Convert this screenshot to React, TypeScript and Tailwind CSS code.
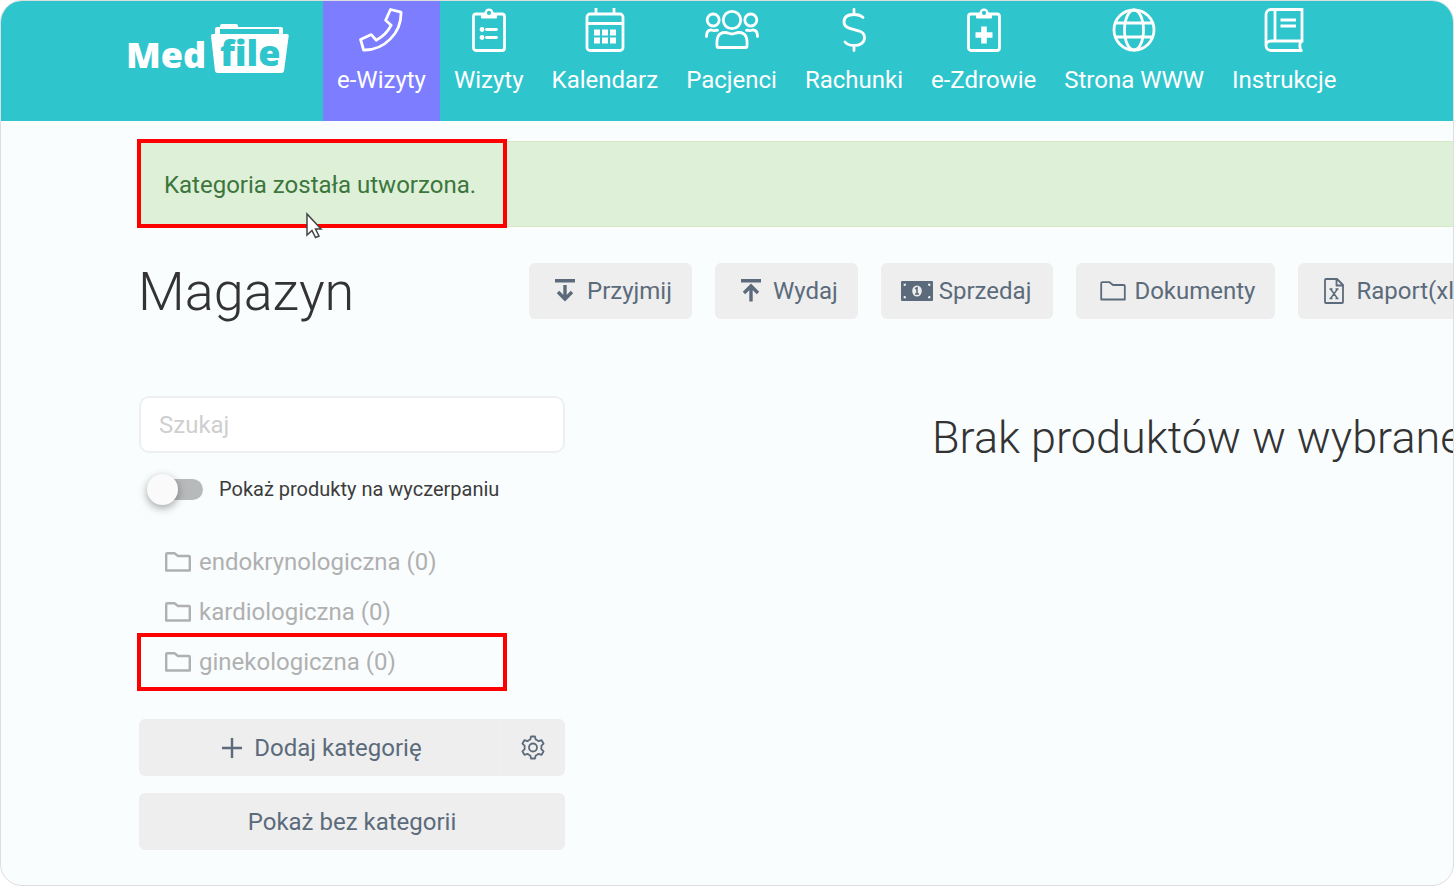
import React from "react";

const PhoneIcon = () => (
  <svg width="44" height="44" viewBox="0 0 44 44" fill="none" stroke="currentColor" strokeWidth="2.8" strokeLinejoin="round">
    <path d="M31.5 1.5 42 4.2C42.6 25 25 42.6 4.6 42L1.6 31.5 12.3 26.6 17.2 32.2C23.5 29 29 23.5 32.2 17.2L26.6 12.3Z" />
  </svg>
);

const ClipboardShape = () => (
  <>
    <rect x="1.5" y="6" width="31" height="36.5" rx="2.5" fill="none" stroke="currentColor" strokeWidth="2.8" />
    <path d="M9 6h4a4.1 4.1 0 0 1 8 0h4v3.5a1 1 0 0 1-1 1H10a1 1 0 0 1-1-1Z" fill="currentColor" />
    <circle cx="17" cy="4.9" r="3.3" fill="#2fc5cd" stroke="currentColor" strokeWidth="2.4" />
  </>
);

const VisitsIcon = () => (
  <svg width="34" height="44" viewBox="0 0 34 44">
    <ClipboardShape />
    <circle cx="10" cy="21.5" r="2.4" fill="currentColor" />
    <circle cx="10" cy="29.5" r="2.4" fill="currentColor" />
    <path d="M14.5 21.5h10M14.5 29.5h10" stroke="currentColor" strokeWidth="2.8" strokeLinecap="round" />
  </svg>
);

const HealthIcon = () => (
  <svg width="34" height="44" viewBox="0 0 34 44">
    <ClipboardShape />
    <path d="M14.2 18.5h5.6v5.7h5.7v5.6h-5.7v5.7h-5.6v-5.7H8.5v-5.6h5.7Z" fill="currentColor" />
  </svg>
);

const CalendarIcon = () => (
  <svg width="40" height="44" viewBox="0 0 40 44">
    <g fill="none" stroke="currentColor" strokeWidth="2.8">
      <rect x="2" y="6" width="36" height="36.5" rx="3" />
      <path d="M2 15.5h36M11 0v6M29 0v6" />
    </g>
    <path
      d="M9 21.5h6v6H9ZM17 21.5h6v6h-6ZM25 21.5h6v6h-6ZM9 29.5h6v6H9ZM17 29.5h6v6h-6ZM25 29.5h6v6h-6Z"
      fill="currentColor"
    />
  </svg>
);

const PatientsIcon = () => (
  <svg width="54" height="44" viewBox="0 0 54 44" fill="none" stroke="currentColor" strokeWidth="2.8" strokeLinecap="round">
    <circle cx="27" cy="12" r="8.7" />
    <circle cx="8.2" cy="12" r="6" />
    <circle cx="45.8" cy="12" r="6" />
    <path d="M12 38C11.5 30 13 24.5 20 24.5c3.5 0 4 1.5 7 1.5s3.5-1.5 7-1.5c7 0 8.5 5.5 8 13.5q0 1.5-1.5 1.5h-27Q12 39.5 12 38Z" />
    <path d="M1.5 28.5C1.5 24 3 22 6 22c1 0 1.5.6 3 .6s2-.6 3.5-.3M52.5 28.5c0-4.5-1.5-6.5-4.5-6.5-1 0-1.5.6-3 .6s-2-.6-3.5-.3" />
  </svg>
);

const DollarIcon = () => (
  <svg width="24" height="44" viewBox="0 0 24 44" fill="none" stroke="currentColor" strokeWidth="2.8" strokeLinecap="round">
    <path d="M12 1.5v5M12 37.5v5M21 9.5C19 7.5 15.5 6.5 12 6.5c-6 0-10 2.5-10 7.5 0 10.5 20.5 4.5 20.5 15.5 0 5.5-4.5 8-10.5 8-4 0-7-1-9-3.5" />
  </svg>
);

const GlobeIcon = () => (
  <svg width="44" height="44" viewBox="0 0 44 44" fill="none" stroke="currentColor" strokeWidth="2.8">
    <circle cx="22" cy="22" r="20" />
    <ellipse cx="22" cy="22" rx="9.5" ry="20" />
    <path d="M3.5 15h37M3.5 29h37" />
  </svg>
);

const BookIcon = () => (
  <svg width="40" height="44" viewBox="0 0 40 44" fill="none" stroke="currentColor" strokeWidth="2.8">
    <path d="M38 1.5H7C4 1.5 2 3.5 2 6.5v31c0 3 2 5 5 5h31.5M38 0v33H7c-3 0-5 2-5 4.5M11 1.5V33M37 33c-1.5 3-1.5 6.5 0 9.5" />
    <path d="M16.5 12H32M16.5 18H32" strokeWidth="3" />
  </svg>
);

const FolderIcon = ({ strokeWidth = 1.8 }: { strokeWidth?: number }) => (
  <svg
    width="26"
    height="20"
    viewBox="0 0 26 20"
    fill="none"
    stroke="currentColor"
    strokeWidth={strokeWidth}
    strokeLinejoin="round"
    className="shrink-0"
  >
    <path d="M1.2 2.2q0-1 1-1h7.3L13 4h10.8q1 0 1 1v13.5H1.2Z" />
  </svg>
);

const ReceiveIcon = () => (
  <svg width="20" height="24" viewBox="0 0 20 24" fill="none" stroke="currentColor" strokeWidth="3.4">
    <path d="M0 1.7h20M10 6v13M3 13l7 7 7-7" />
  </svg>
);

const IssueIcon = () => (
  <svg width="20" height="24" viewBox="0 0 20 24" fill="none" stroke="currentColor" strokeWidth="3.4">
    <path d="M0 1.7h20M10 22.5V8M3 14l7-7 7 7" />
  </svg>
);

const MoneyIcon = () => (
  <svg width="32" height="20" viewBox="0 0 32 20">
    <rect width="32" height="20" rx="1" fill="currentColor" />
    <path d="M3.5 5V3.5H5M27 3.5h1.5V5M28.5 15v1.5H27M5 16.5H3.5V15" fill="none" stroke="#eee" strokeWidth="1.6" />
    <ellipse cx="16" cy="10" rx="4.8" ry="5.5" fill="#eee" />
    <path d="M14 7.8 16 6.8v6M14 13h4" fill="none" stroke="currentColor" strokeWidth="1.6" />
  </svg>
);

const ExcelIcon = () => (
  <svg width="20" height="26" viewBox="0 0 20 26" fill="none" stroke="currentColor" strokeWidth="1.8" strokeLinejoin="round">
    <path d="M1 2q0-1 1-1h11l6 6v17q0 1-1 1H2q-1 0-1-1ZM12.5 1v6.5H19" />
    <path d="m6.5 11 7 9.5M13.5 11l-7 9.5M5.5 11h3M11.5 11h3M5.5 20.5h3M11.5 20.5h3" strokeWidth="1.4" />
  </svg>
);

const PlusIcon = () => (
  <svg width="20" height="20" viewBox="0 0 20 20" stroke="currentColor" strokeWidth="2.4">
    <path d="M10 0v20M0 10h20" />
  </svg>
);

const GearIcon = () => (
  <svg width="26" height="26" viewBox="0 0 26 26" fill="none" stroke="currentColor" strokeWidth="1.8" strokeLinejoin="round">
    <path d="M10.3 4.5 11 1.5h4l.7 3q1.6.6 2.9 1.7l3-1 2 3.5-2.3 2.1q.3 1.7 0 3.4l2.3 2.1-2 3.5-3-1q-1.3 1.1-2.9 1.7l-.7 3h-4l-.7-3q-1.6-.6-2.9-1.7l-3 1-2-3.5 2.3-2.1q-.3-1.7 0-3.4L2.4 8.7l2-3.5 3 1q1.3-1.1 2.9-1.7Z" />
    <circle cx="13" cy="12.5" r="4" />
  </svg>
);

const Logo = () => (
  <svg
    width="162"
    height="52"
    viewBox="0 0 162 52"
    fill="white"
    role="img"
    aria-label="MedFile"
    className="overflow-visible"
  >
    <text x="-1" y="45" fontFamily="'Open Sans', sans-serif" fontWeight="800" fontSize="36">
      Med
    </text>
    <path d="M88 13V6q0-2 2-2h3V3q0-2 2-2h14q2 0 2 2v1h43q2 0 2 2v7h-4V6H93v7Z" />
    <path d="M86 11h74q2 0 1.7 2L157 48q-.4 2-2.5 2h-64q-2 0-2.5-2L84 13q-.2-2 2-2Z" />
    <text x="93" y="43" fill="#2fc5cd" fontFamily="'Open Sans', sans-serif" fontWeight="800" fontSize="36">
      file
    </text>
  </svg>
);

const navItems = [
  { label: "e-Wizyty", icon: PhoneIcon, active: true },
  { label: "Wizyty", icon: VisitsIcon },
  { label: "Kalendarz", icon: CalendarIcon },
  { label: "Pacjenci", icon: PatientsIcon },
  { label: "Rachunki", icon: DollarIcon },
  { label: "e-Zdrowie", icon: HealthIcon },
  { label: "Strona WWW", icon: GlobeIcon },
  { label: "Instrukcje", icon: BookIcon },
];

const actions = [
  { label: "Przyjmij", icon: ReceiveIcon, style: "gap-3 pl-[26px] pr-5" },
  { label: "Wydaj", icon: IssueIcon, style: "gap-3 pl-[26px] pr-5" },
  { label: "Sprzedaj", icon: MoneyIcon, style: "gap-1.5 pl-5 pr-[22px]" },
  { label: "Dokumenty", icon: FolderIcon, style: "gap-2 pl-6 pr-5" },
  { label: "Raport(xls)", icon: ExcelIcon, style: "gap-3 pl-[26px] pr-5" },
];

const categories = [
  { name: "endokrynologiczna", count: 0 },
  { name: "kardiologiczna", count: 0 },
  { name: "ginekologiczna", count: 0, highlighted: true },
];

const Header = () => (
  <header className="flex h-[120px] shrink-0 bg-[#2fc5cd] pl-[126px] text-white">
    <a href="#" className="mr-[34px] shrink-0 pt-[22px]">
      <Logo />
    </a>
    <nav className="flex">
      {navItems.map(({ label, icon: Icon, active }) => (
        <a
          key={label}
          href="#"
          className={`flex flex-col items-center whitespace-nowrap px-[14px] pt-[7px] ${
            active ? "bg-[#7d7dff]" : ""
          }`}
        >
          <Icon />
          <span className="mt-3 leading-8">{label}</span>
        </a>
      ))}
    </nav>
  </header>
);

const Sidebar = () => (
  <aside className="w-[426px] shrink-0">
    <input
      type="text"
      aria-label="Szukaj"
      placeholder="Szukaj"
      className="block h-[57px] w-full rounded-[10px] border-2 border-[#edf0f2] bg-white px-[18px] placeholder:text-[#cfcfcf] focus-visible:outline-none"
    />
    {/* low stock switch */}
    <label className="mt-5 flex h-8 items-center gap-4 pl-2 text-[20px] text-[#3c3c3c]">
      <span className="relative flex h-8 w-14 items-center">
        <input type="checkbox" className="peer absolute inset-0 z-10 opacity-0" />
        <span className="ml-2 h-[21px] w-12 rounded-full bg-[#b8b9ba]" />
        <span className="absolute left-0 size-[31px] rounded-full bg-[#fafafa] shadow-[0_3px_8px_rgba(0,0,0,0.35)] peer-checked:left-6" />
      </span>
      Pokaż produkty na wyczerpaniu
    </label>
    {/* category list */}
    <ul className="mt-8 text-[#b0b0b0]">
      {categories.map(({ name, count, highlighted }) => (
        <li key={name} className="relative">
          <a href="#" className="flex h-[50px] items-center gap-2 pl-[26px]">
            <FolderIcon strokeWidth={2.4} />
            {name} ({count})
          </a>
          {highlighted && (
            <span className="absolute -left-0.5 -top-1 h-[58px] w-[370px] border-4 border-[#ff0000]" />
          )}
        </li>
      ))}
    </ul>
    <div className="mt-8 flex h-[57px] rounded-md bg-[#eee] text-[#5b6b7b]">
      <button type="button" className="flex grow items-center justify-center gap-3 pl-1.5">
        <PlusIcon />
        Dodaj kategorię
      </button>
      <button type="button" aria-label="Ustawienia" className="flex w-[66px] items-center justify-center border-l border-[#f1f1f1]">
        <GearIcon />
      </button>
    </div>
    <button type="button" className="mt-[17px] h-[57px] w-full rounded-md bg-[#eee] text-[#5b6b7b]">
      Pokaż bez kategorii
    </button>
  </aside>
);

const App = () => {
  return (
    <div className="flex min-h-screen flex-col overflow-hidden rounded-[22px] border border-[#dcdedf] bg-[#f9fdfe] font-[Roboto,sans-serif] text-[24px]">
      <Header />
      <main className="pl-[137px]">
        <div className="relative mt-5 flex h-[86px] items-center border-y border-[#d6e9c6] bg-[#dff0d8] pl-[26px] pt-0.5 text-[#3c763d]">
          Kategoria została utworzona.
          <span className="absolute -left-px -top-[3px] h-[89px] w-[370px] border-4 border-[#ff0000]" />
          <svg width="18" height="28" viewBox="0 0 18 28" className="absolute left-[167px] top-[70px]">
            <path d="M2 2v21l5-4.5 3.5 7 3.5-1.5-3.5-7H16Z" fill="white" stroke="#444" strokeWidth="1.5" />
          </svg>
        </div>
        {/* title and actions */}
        <div className="mt-9 flex h-14 items-center">
          <h1 className="w-[391px] shrink-0 pt-0.5 text-[54px] font-light leading-none text-[#333]">Magazyn</h1>
          <div className="flex gap-[23px]">
            {actions.map(({ label, icon: Icon, style }) => (
              <button
                key={label}
                type="button"
                className={`flex h-14 shrink-0 items-center whitespace-nowrap rounded-md bg-[#eee] text-[#5b6b7b] ${style}`}
              >
                <Icon />
                {label}
              </button>
            ))}
          </div>
        </div>
        <div className="mt-[77px] flex pl-px">
          <Sidebar />
          <section className="grow pl-[367px] pt-2">
            <h2 className="whitespace-nowrap text-[45px] font-light text-[#333]">
              Brak produktów w wybranej kategorii
            </h2>
          </section>
        </div>
      </main>
    </div>
  );
};

export default App;
